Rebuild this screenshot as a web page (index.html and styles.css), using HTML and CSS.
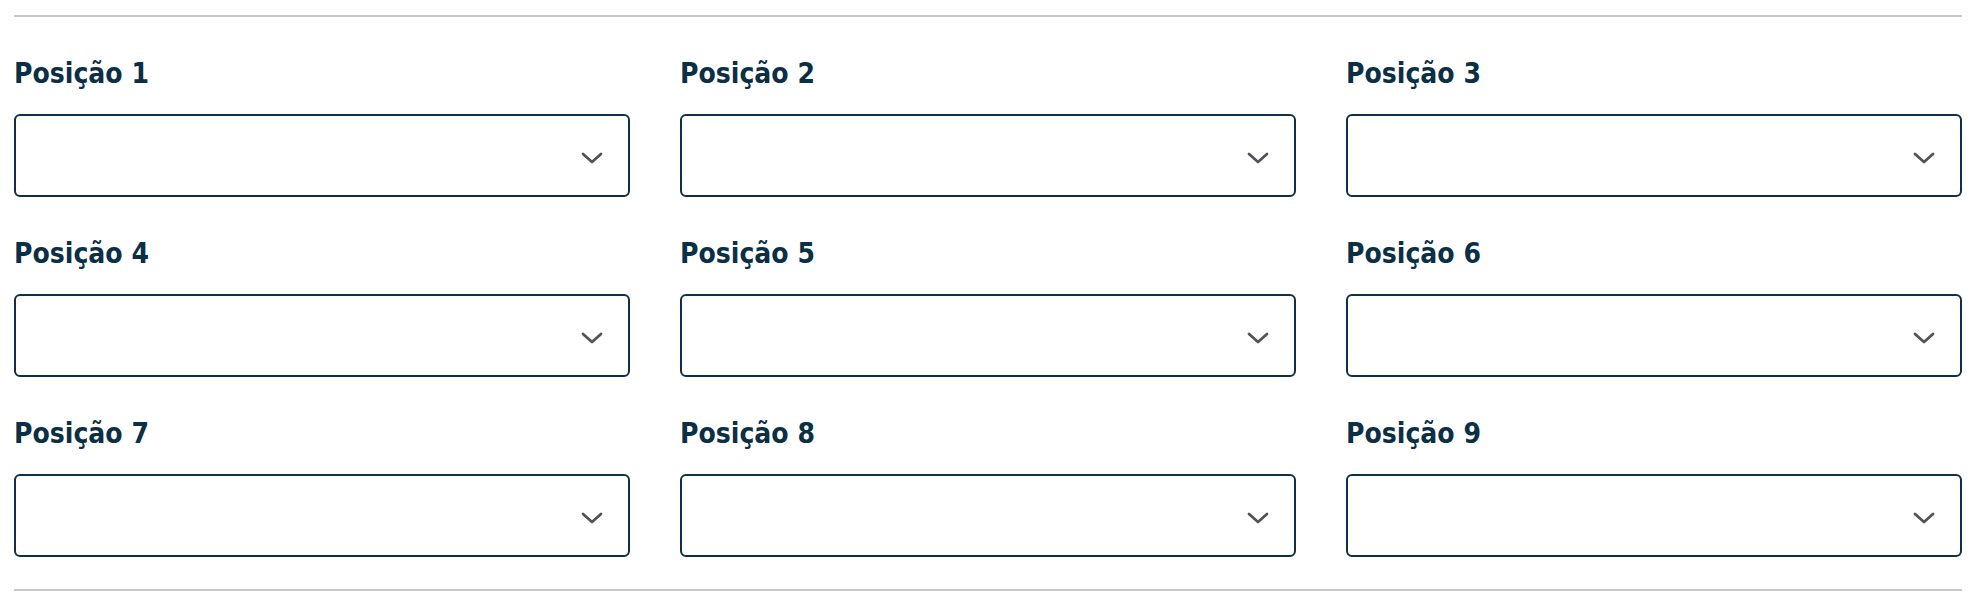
FILE: index.html
```html
<!DOCTYPE html>
<html lang="pt">
<head>
<meta charset="utf-8">
<title>Posições</title>
<link rel="stylesheet" href="styles.css">
</head>
<body>
<div class="wrap">
  <div class="rule"></div>
  <div class="grid">
    <div class="field"><label class="label">Posição 1</label><div class="select"><svg class="chev" viewBox="0 0 22 12" width="22" height="12"><polyline points="2,2 11,10 20,2"/></svg></div></div>
    <div class="field"><label class="label">Posição 2</label><div class="select"><svg class="chev" viewBox="0 0 22 12" width="22" height="12"><polyline points="2,2 11,10 20,2"/></svg></div></div>
    <div class="field"><label class="label">Posição 3</label><div class="select"><svg class="chev" viewBox="0 0 22 12" width="22" height="12"><polyline points="2,2 11,10 20,2"/></svg></div></div>
    <div class="field"><label class="label">Posição 4</label><div class="select"><svg class="chev" viewBox="0 0 22 12" width="22" height="12"><polyline points="2,2 11,10 20,2"/></svg></div></div>
    <div class="field"><label class="label">Posição 5</label><div class="select"><svg class="chev" viewBox="0 0 22 12" width="22" height="12"><polyline points="2,2 11,10 20,2"/></svg></div></div>
    <div class="field"><label class="label">Posição 6</label><div class="select"><svg class="chev" viewBox="0 0 22 12" width="22" height="12"><polyline points="2,2 11,10 20,2"/></svg></div></div>
    <div class="field"><label class="label">Posição 7</label><div class="select"><svg class="chev" viewBox="0 0 22 12" width="22" height="12"><polyline points="2,2 11,10 20,2"/></svg></div></div>
    <div class="field"><label class="label">Posição 8</label><div class="select"><svg class="chev" viewBox="0 0 22 12" width="22" height="12"><polyline points="2,2 11,10 20,2"/></svg></div></div>
    <div class="field"><label class="label">Posição 9</label><div class="select"><svg class="chev" viewBox="0 0 22 12" width="22" height="12"><polyline points="2,2 11,10 20,2"/></svg></div></div>
  </div>
  <div class="rule rule-bottom"></div>
</div>
</body>
</html>
```

FILE: styles.css
```css
html, body {
  margin: 0;
  padding: 0;
  background: #ffffff;
}

.wrap {
  padding: 15px 22px 0 14px;
}

.rule {
  height: 2px;
  background: #c8c8c8;
}

.rule-bottom {
  margin-top: 32px;
}

.grid {
  display: grid;
  grid-template-columns: repeat(3, 1fr);
  column-gap: 50px;
}

.field {
  display: flex;
  flex-direction: column;
  padding-top: 42px;
}

.label {
  font-family: "DejaVu Sans", sans-serif;
  font-stretch: condensed;
  font-weight: bold;
  font-size: 28px;
  line-height: 30px;
  color: #0b2f45;
  margin-bottom: 25px;
}

.select {
  box-sizing: border-box;
  height: 83px;
  border: 2px solid #0d3048;
  border-radius: 6px;
  display: flex;
  align-items: center;
  justify-content: flex-end;
  padding: 4px 25px 0 0;
}

.chev {
  display: block;
  fill: none;
  stroke: #515357;
  stroke-width: 2.8;
  stroke-linecap: round;
  stroke-linejoin: round;
}
```
